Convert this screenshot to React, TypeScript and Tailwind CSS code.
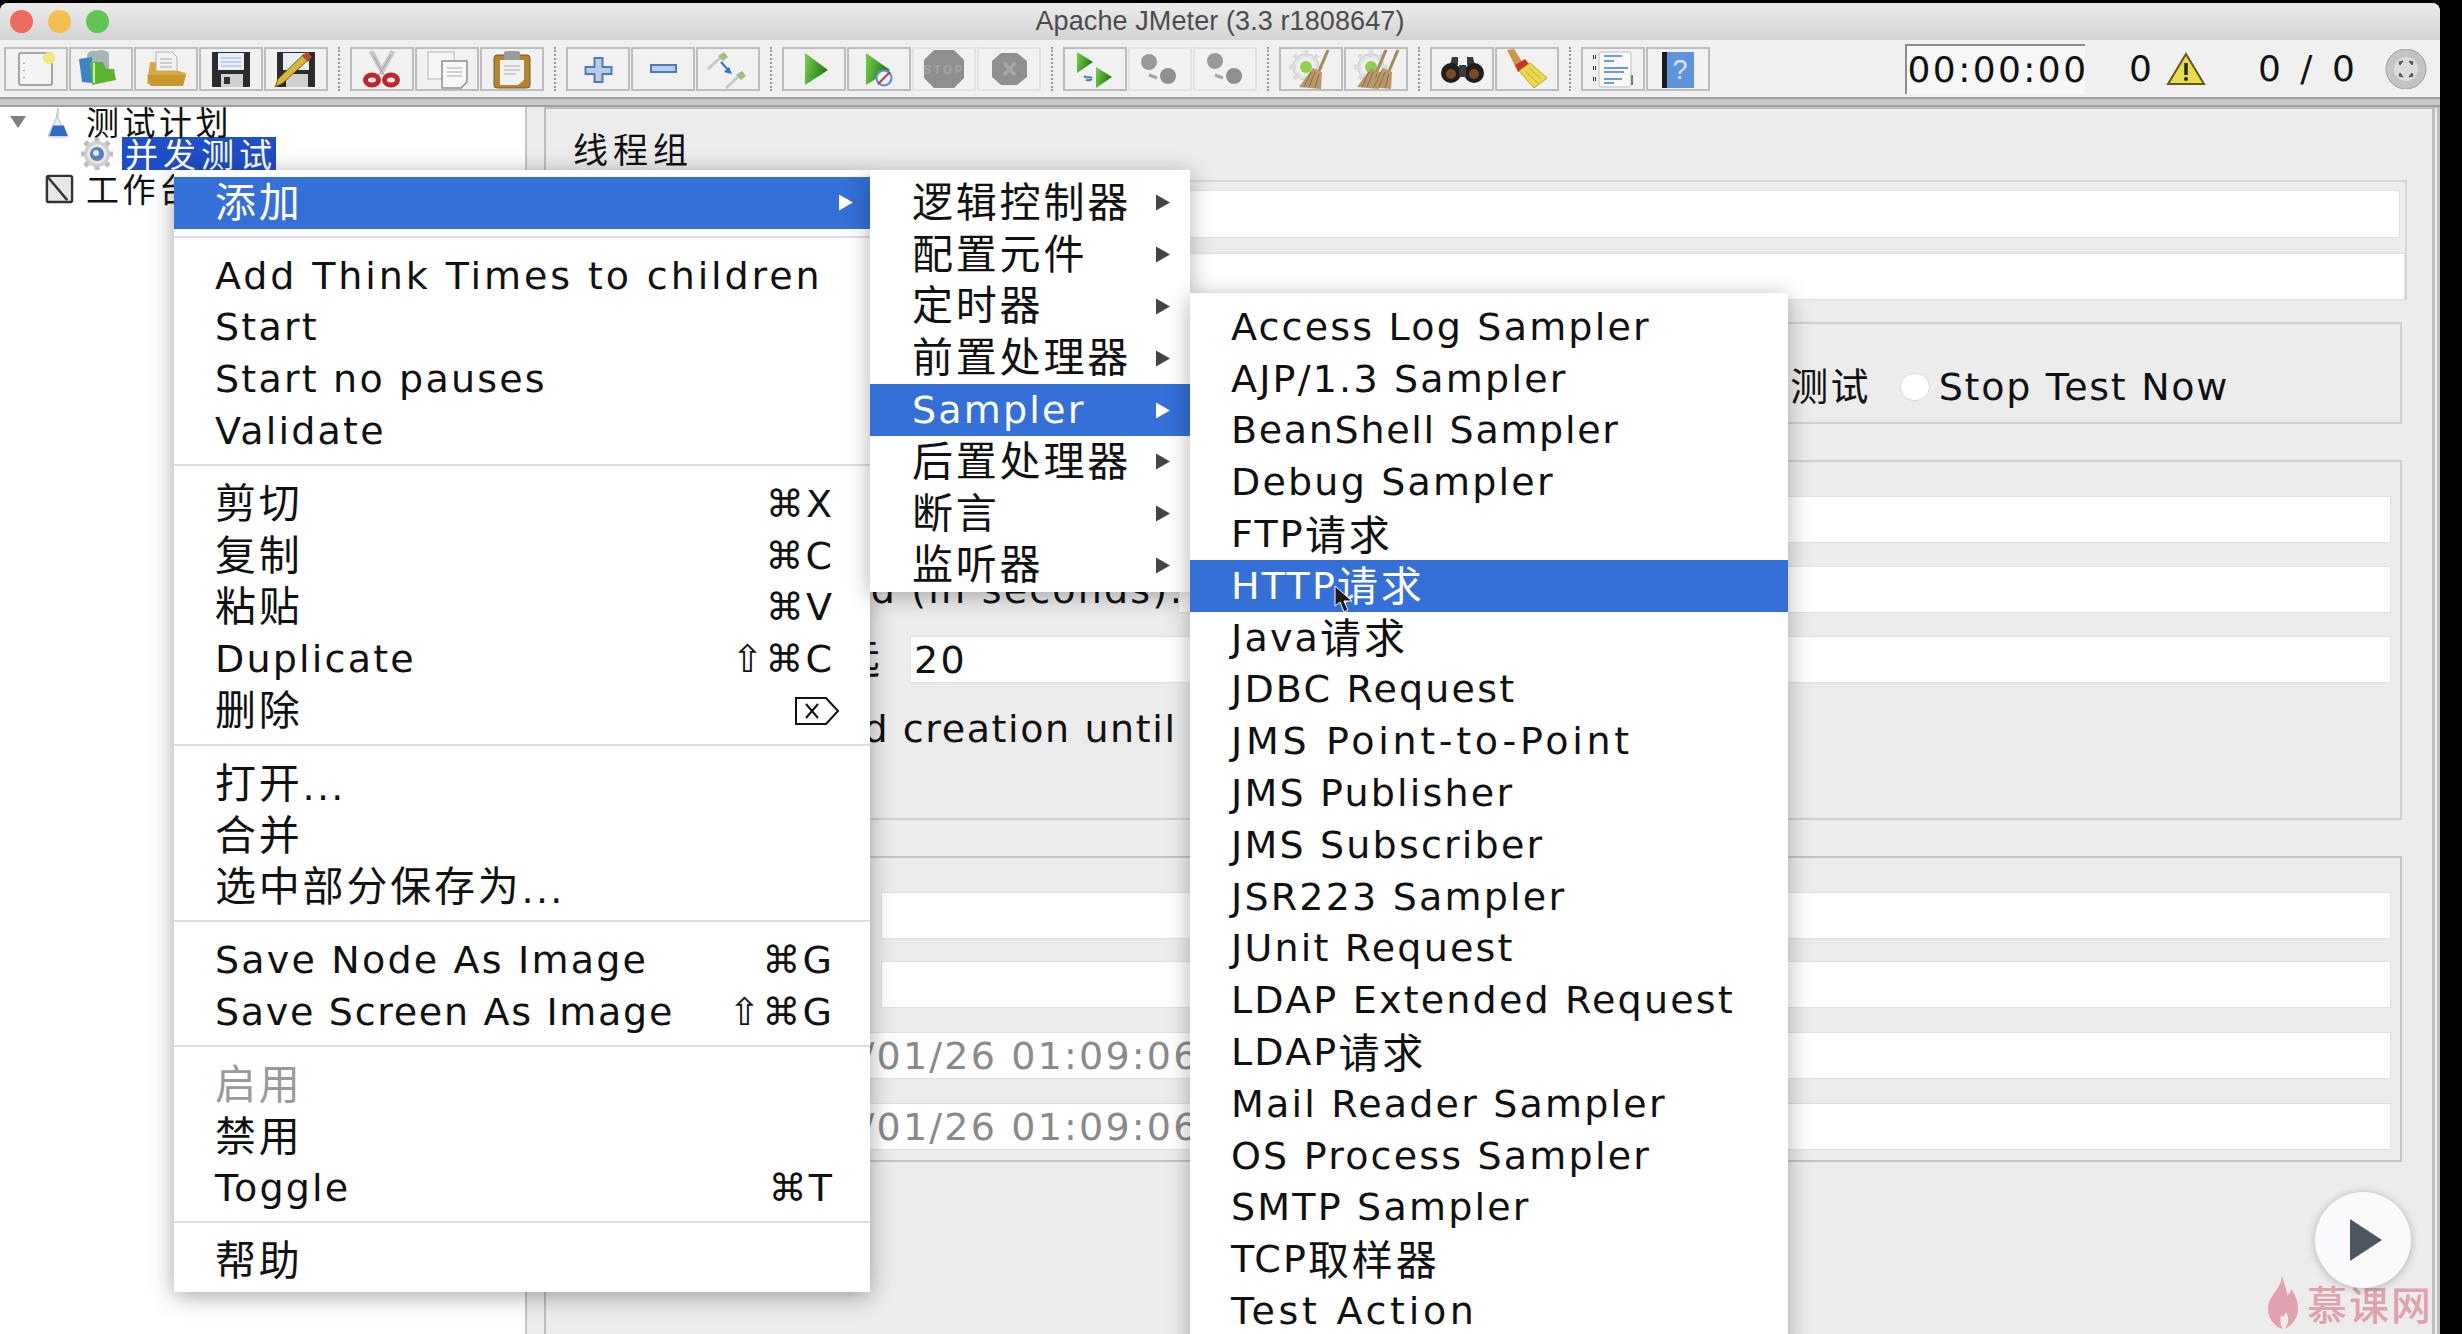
import React from "react";

const T = ({ text }: { text: string }) => (
  <>
    {text.split(/([\u4e00-\u9fff]+)/).map((part, i) =>
      /[\u4e00-\u9fff]/.test(part) ? (
        <span key={i} className="relative top-[-2px] font-['Noto_Sans_CJK_SC',sans-serif] text-[41px] tracking-[2.8px]">
          {part}
        </span>
      ) : (
        <span key={i}>{part}</span>
      ),
    )}
  </>
);

const Ico = ({ children }: { children: React.ReactNode }) => (
  <svg viewBox="0 0 64 44" className="h-[44px] w-[64px]">
    {children}
  </svg>
);

const Btn = ({ off, children }: { off?: boolean; children: React.ReactNode }) => (
  <div
    className={`h-[44px] w-[64px] shrink-0 border-2 bg-[#f1f1f2] ${off ? "border-[#e2e2e3]" : "border-[#bdbdbe]"}`}
  >
    <div className="-m-[2px]">{children}</div>
  </div>
);

const Sep = () => (
  <div className="flex h-[44px] w-[22px] shrink-0 justify-center">
    <div className="h-full border-l-2 border-dotted border-[#9a9a9a]" />
  </div>
);

const Broom = ({ dx = 0 }: { dx?: number }) => (
  <g transform={`translate(${dx} 0)`}>
    <path d="M49 3 L40 24" stroke="#a58a5c" strokeWidth="3" />
    <path d="M34 21 L43 25 L42 42 L20 40 Z" fill="#b8976a" />
    <path d="M36 25 L30 40 M40 27 L36 41 M32 25 L25 40" stroke="#8c6d43" strokeWidth="1" />
  </g>
);

const Gear = () => (
  <g>
    <circle cx="27" cy="20" r="13" fill="#e6e6e6" stroke="#c4c4c4" />
    <path d="M27 3v34M10 20h34M15 8l24 24M39 8L15 32" stroke="#dcdcdc" strokeWidth="5" />
    <circle cx="27" cy="20" r="10" fill="#eeeeee" />
    <circle cx="27" cy="20" r="6" fill="#8fd14f" />
  </g>
);

const Dropper = ({ x, y }: { x: number; y: number }) => (
  <g transform={`translate(${x} ${y})`}>
    <path d="M0 14 L13 2" stroke="#c9c9c9" strokeWidth="3" />
    <path d="M10 1 L16 -3 L20 2 L15 6 Z" fill="#9cc47a" />
  </g>
);

const icons: { off?: boolean; el: React.ReactNode }[][] = [
  [
    {
      el: (
        <Ico>
          <rect x="15" y="6" width="33" height="32" rx="2" fill="#f4f4f4" stroke="#8b8b8b" strokeWidth="1.5" />
          <circle cx="45" cy="11" r="6" fill="#f3e87e" />
          <path d="M20 16v1M20 23v1M20 30v1" stroke="#888" strokeWidth="1.5" />
        </Ico>
      ),
    },
    {
      el: (
        <Ico>
          <path d="M18 8c1-4 5-5 9-4 4-2 10-1 13 2v20H20z" fill="#a9b4ba" />
          <path d="M10 12l13-2v26l-10-1z" fill="#3a85c6" />
          <path d="M21 15h13l3 7h8l2 11-24 5z" fill="#5cb531" />
          <path d="M25 16v20" stroke="#c9eab5" strokeWidth="2" />
        </Ico>
      ),
    },
    {
      el: (
        <Ico>
          <path d="M22 5h16l5 5v14H22z" fill="#f2f2f2" stroke="#b5b5b5" />
          <path d="M26 12h12M26 16h12M26 20h12" stroke="#aaa" />
          <path d="M16 15h6v9h22l8 2-3 13H17l-4-3z" fill="#d9a93f" />
          <path d="M13 28h39l-3 11H17z" fill="#c9982f" />
        </Ico>
      ),
    },
    {
      el: (
        <Ico>
          <path d="M13 5h38v35H13z" fill="#2c2c2c" />
          <rect x="19" y="6" width="26" height="17" fill="#e7edf7" />
          <path d="M22 11h20M22 15h20M22 19h20" stroke="#9db4d6" />
          <rect x="22" y="27" width="22" height="13" fill="#d0d0d0" />
          <rect x="25" y="30" width="6" height="7" fill="#333" />
        </Ico>
      ),
    },
    {
      el: (
        <Ico>
          <path d="M13 5h38v35H13z" fill="#2c2c2c" />
          <rect x="19" y="6" width="26" height="17" fill="#e7edf7" />
          <rect x="22" y="27" width="22" height="13" fill="#d0d0d0" />
          <path d="M11 40l3-8 26-25 5 5-26 24z" fill="#d9b53a" stroke="#6f5a14" />
          <path d="M38 9l6 6 4-5-5-5z" fill="#b8472f" />
        </Ico>
      ),
    },
  ],
  [
    {
      el: (
        <Ico>
          <path d="M21 4l11 20 11-20" fill="none" stroke="#c9c9c9" strokeWidth="5" />
          <path d="M23 8l11 20M41 8L29 28" stroke="#a0a0a0" strokeWidth="1" />
          <ellipse cx="22" cy="33" rx="6.5" ry="5" fill="none" stroke="#c2262a" strokeWidth="5" />
          <ellipse cx="41" cy="33" rx="6.5" ry="5" fill="none" stroke="#c2262a" strokeWidth="5" />
        </Ico>
      ),
    },
    {
      el: (
        <Ico>
          <rect x="13" y="5" width="26" height="27" fill="#f5f5f5" stroke="#c9c9c9" strokeWidth="1.5" />
          <path d="M27 14h25v21l-6 6H27z" fill="#f7f7f7" stroke="#8f8f8f" strokeWidth="1.5" />
          <path d="M32 21h15M32 25h15M32 29h15" stroke="#a8a8a8" />
        </Ico>
      ),
    },
    {
      el: (
        <Ico>
          <rect x="14" y="8" width="36" height="33" rx="3" fill="#b28533" stroke="#7c5a20" />
          <path d="M20 13h24v20l-6 5H20z" fill="#f2f2f2" />
          <rect x="24" y="4" width="16" height="9" rx="2" fill="#9a9a9a" />
          <path d="M24 19h16M24 23h16M24 27h12" stroke="#aaa" />
        </Ico>
      ),
    },
  ],
  [
    {
      el: (
        <Ico>
          <path
            d="M28.5 11h8v9h9v7h-9v8h-8v-8h-9v-7h9z"
            fill="#b9cdea"
            stroke="#4f7cb9"
            strokeWidth="2"
          />
        </Ico>
      ),
    },
    {
      el: (
        <Ico>
          <rect x="20" y="18" width="25" height="7" fill="#b9cdea" stroke="#4f7cb9" strokeWidth="2" />
        </Ico>
      ),
    },
    {
      el: (
        <Ico>
          <Dropper x={12} y={8} />
          <Dropper x={30} y={27} />
          <path d="M25 15l8 9" stroke="#2f6fd0" strokeWidth="2" />
          <path d="M36 27l-8-2 5-5z" fill="#2f6fd0" />
        </Ico>
      ),
    },
  ],
  [
    {
      el: (
        <Ico>
          <defs>
            <linearGradient id="grn" x1="0" y1="0" x2="1" y2="0.3">
              <stop offset="0" stopColor="#7bd04a" />
              <stop offset="1" stopColor="#1f7a16" />
            </linearGradient>
          </defs>
          <path d="M23 6 L46 23 L23 38 Z" fill="url(#grn)" />
        </Ico>
      ),
    },
    {
      el: (
        <Ico>
          <path d="M19 6 L43 23 L19 38 Z" fill="url(#grn)" />
          <circle cx="37" cy="31" r="7.5" fill="#e9eff8" stroke="#5b8bd0" strokeWidth="2" />
          <path d="M31 37l12-12" stroke="#c23b3b" strokeWidth="2" />
        </Ico>
      ),
    },
    {
      off: true,
      el: (
        <Ico>
          <path d="M22 3h20l10 10v18L42 41H22L12 31V13z" fill="#8f8f8f" />
          <text x="32" y="27" textAnchor="middle" fontFamily="Liberation Sans" fontWeight="700" fontSize="12" fill="#a3a3a3">
            STOP
          </text>
        </Ico>
      ),
    },
    {
      off: true,
      el: (
        <Ico>
          <path d="M24 6h16l10 8v16l-10 8H24l-9-8V14z" fill="#8f8f8f" />
          <path d="M27 16l11 12M38 16L27 28" stroke="#a5a5a5" strokeWidth="4" />
        </Ico>
      ),
    },
  ],
  [
    {
      el: (
        <Ico>
          <path d="M14 5 L30 15 L14 26 Z" fill="url(#grn)" />
          <path d="M33 20 L49 30 L33 41 Z" fill="url(#grn)" />
          <path d="M21 29c3 3 5 0 8 2M23 33c3 1 5-1 6 0" stroke="#4f78c8" strokeWidth="2" fill="none" />
        </Ico>
      ),
    },
    {
      off: true,
      el: (
        <Ico>
          <circle cx="21" cy="15" r="8" fill="#999" />
          <circle cx="40" cy="29" r="8" fill="#8f8f8f" />
          <path d="M21 28l8 3" stroke="#a5a5a5" strokeWidth="3" />
        </Ico>
      ),
    },
    {
      off: true,
      el: (
        <Ico>
          <circle cx="22" cy="14" r="8" fill="#999" />
          <circle cx="41" cy="29" r="8" fill="#8f8f8f" />
          <path d="M22 28l8 3" stroke="#a5a5a5" strokeWidth="3" />
        </Ico>
      ),
    },
  ],
  [
    {
      el: (
        <Ico>
          <Gear />
          <Broom />
        </Ico>
      ),
    },
    {
      el: (
        <Ico>
          <Gear />
          <Broom dx={-7} />
          <Broom dx={5} />
        </Ico>
      ),
    },
  ],
  [
    {
      el: (
        <Ico>
          <path d="M22 10h6v8h9v-8h6l2 8H20z" fill="#3a3a3a" />
          <circle cx="21" cy="26" r="10" fill="#1f1f1f" />
          <circle cx="44" cy="26" r="10" fill="#1f1f1f" />
          <circle cx="21" cy="27" r="5" fill="#7b4a22" />
          <circle cx="44" cy="27" r="5" fill="#7b4a22" />
          <rect x="29" y="18" width="7" height="12" fill="#3a3a3a" />
        </Ico>
      ),
    },
    {
      el: (
        <Ico>
          <path d="M12 3l7-1 9 14-7 5z" fill="#c99a4a" />
          <path d="M20 18l10-6 4 5-11 8z" fill="#c9352c" />
          <path d="M24 24l11-8 17 15-13 10z" fill="#ecd94e" stroke="#b9a52b" />
          <path d="M30 24l14 13M34 21l12 11" stroke="#c9b22f" />
        </Ico>
      ),
    },
  ],
  [
    {
      el: (
        <Ico>
          <rect x="18" y="5" width="32" height="35" rx="2" fill="#f8f8f8" stroke="#c2c2c2" />
          <path d="M12 10h3M12 21h3M12 32h3" stroke="#333" strokeWidth="4" strokeDasharray="1 1" />
          <path d="M23 9h18M23 14h10M23 21h24M23 25h20M23 32h18M23 36h10" stroke="#6e9bd6" strokeWidth="2" />
          <rect x="50" y="28" width="2" height="10" fill="#4aa33a" />
        </Ico>
      ),
    },
    {
      el: (
        <Ico>
          <rect x="16" y="5" width="32" height="36" fill="#5f93dc" />
          <rect x="16" y="5" width="5" height="36" fill="#1c1c1c" />
          <text x="35" y="32" textAnchor="middle" fontFamily="Liberation Sans" fontSize="27" fill="#dce7f7">
            ?
          </text>
        </Ico>
      ),
    },
  ],
];

const Arrow = ({ on }: { on?: boolean }) => (
  <svg viewBox="0 0 16 16" className="h-[17px] w-[16px]">
    <path d="M1 0 L15 8 L1 16 Z" fill={on ? "#ffffff" : "#444444"} />
  </svg>
);

// Lucida's widths differ per string, so a few rows get their own tracking
const rowTrack: Record<string, string> = {
  "Add Think Times to children": "tracking-[2.9px]",
  "Save Screen As Image": "tracking-[1.7px]",
  "BeanShell Sampler": "tracking-[1.7px]",
  "JMS Point-to-Point": "tracking-[3.7px]",
  "Test Action": "tracking-[3.7px]",
};

const Row = ({ label, on, dim, right }: { label: string; on?: boolean; dim?: boolean; right?: React.ReactNode }) => (
  <div
    className={`flex h-[51.8px] items-center justify-between pl-[41px] pr-[36px] ${on ? "bg-[#3570d8] text-white" : dim ? "text-[#9a9a9a]" : "text-[#111111]"}`}
  >
    <span className={`whitespace-nowrap ${rowTrack[label] ?? ""}`}>
      <T text={label} />
    </span>
    {right}
  </div>
);

const Line = () => (
  <div className="h-[21px] pt-[7px]">
    <div className="h-[2px] bg-[#dedede]" />
  </div>
);

const Key = ({ k }: { k: string }) => <span className="whitespace-nowrap text-[38px] tracking-[2px]">{k}</span>;

const sub1 = ["逻辑控制器", "配置元件", "定时器", "前置处理器", "Sampler", "后置处理器", "断言", "监听器"];
const sub2 = [
  "Access Log Sampler",
  "AJP/1.3 Sampler",
  "BeanShell Sampler",
  "Debug Sampler",
  "FTP请求",
  "HTTP请求",
  "Java请求",
  "JDBC Request",
  "JMS Point-to-Point",
  "JMS Publisher",
  "JMS Subscriber",
  "JSR223 Sampler",
  "JUnit Request",
  "LDAP Extended Request",
  "LDAP请求",
  "Mail Reader Sampler",
  "OS Process Sampler",
  "SMTP Sampler",
  "TCP取样器",
  "Test Action",
];

const Field = ({ className, children }: { className: string; children?: React.ReactNode }) => (
  <div className={`h-[47px] overflow-hidden whitespace-nowrap border border-[#e0e0e0] bg-white leading-[46px] ${className}`}>
    {children}
  </div>
);

export default function App() {
  return (
    <div className="relative h-[1334px] w-[2462px] overflow-hidden bg-black pt-[3px] font-['DejaVu_Sans','Noto_Sans_CJK_SC',sans-serif] text-[38px] leading-none tracking-[2.2px] text-[#111111]">
      <div className="flex h-[1331px] w-[2440px] flex-col overflow-hidden rounded-t-[8px] bg-[#ececed]">
        {/* title bar */}
        <div className="relative flex h-[37px] shrink-0 items-center justify-center bg-gradient-to-b from-[#ececec] to-[#d3d3d3] font-['Liberation_Sans',sans-serif] text-[27px] tracking-[0.1px] text-[#4c4c4c]">
          <div className="absolute left-[10px] top-[7px] flex gap-[15px]">
            <div className="h-[23px] w-[23px] rounded-full bg-[#ec6a5e]" />
            <div className="h-[23px] w-[23px] rounded-full bg-[#f4bf4f]" />
            <div className="h-[23px] w-[23px] rounded-full bg-[#61c554]" />
          </div>
          Apache JMeter (3.3 r1808647)
        </div>

        {/* toolbar */}
        <div className="flex h-[57px] shrink-0 items-center bg-[#f0f0f1] pl-[4px]">
          {icons.map((group, g) => (
            <React.Fragment key={g}>
              {g > 0 && <Sep />}
              <div className="flex gap-[1px]">
                {group.map((b, i) => (
                  <Btn key={i} off={b.off}>
                    {b.el}
                  </Btn>
                ))}
              </div>
            </React.Fragment>
          ))}
          <div className="ml-[195px] flex h-[50px] w-[180px] items-center justify-center border-l-2 border-t-2 border-[#8d8d8d] bg-[#f7f7f7] pl-[4px] text-[36px] tracking-[2.4px] text-[#111111]">
            00:00:00
          </div>
          <span className="ml-[44px] w-[36px] text-[36px]">0</span>
          <svg viewBox="0 0 40 34" className="h-[34px] w-[42px]">
            <path d="M20 2 L38 32 H2 Z" fill="#e8dc4a" stroke="#5d5a1e" strokeWidth="2" />
            <path d="M20 11v12" stroke="#222" strokeWidth="3.5" />
            <circle cx="20" cy="27" r="2" fill="#222" />
          </svg>
          <span className="ml-[51px] w-[126px] whitespace-nowrap text-[36px] tracking-[4px]">0 / 0</span>
          <svg viewBox="0 0 44 40" className="h-[40px] w-[44px]">
            <circle cx="22" cy="20" r="20" fill="#c4c4c4" stroke="#a0a0a0" />
            <circle cx="22" cy="20" r="12" fill="#dcdcdc" />
            <path d="M15 13l4-1-3 4zM29 13l-4-1 3 4zM15 27l4 1-3-4zM29 27l-4 1 3-4z" fill="#555" stroke="#555" />
          </svg>
        </div>

        <div className="h-[10px] shrink-0 border-y-2 border-[#9f9f9f] bg-[#c9c9c9]" />

        {/* body */}
        <div className="flex min-h-0 flex-1">
          <div className="w-[527px] shrink-0 border-r-2 border-[#c4c4c4] bg-white font-['Noto_Sans_CJK_SC',sans-serif] text-[33px] tracking-[3.5px]">
            <div className="flex h-[30px] items-center">
              <svg viewBox="0 0 16 12" className="ml-[10px] h-[12px] w-[16px]">
                <path d="M0 0 H16 L8 12 Z" fill="#7f7f7f" />
              </svg>
              <svg viewBox="0 0 28 32" className="ml-[18px] h-[31px] w-[28px]">
                <path d="M14 1v11l10 17a2 2 0 0 1-2 2H6a2 2 0 0 1-2-2l8-17z" fill="#e9eef4" stroke="#b6c0cc" />
                <path d="M9 19h11l4 11H5z" fill="#2f6cc8" />
              </svg>
              <span className="relative top-[-1px] ml-[14px]">测试计划</span>
            </div>
            <div className="flex h-[33px] items-center pl-[78px]">
              <svg viewBox="0 0 38 32" className="h-[32px] w-[38px]">
                <path d="M19 0v32M3 16h32M7 4l24 24M31 4L7 28" stroke="#bdbdbd" strokeWidth="5" />
                <circle cx="19" cy="16" r="13" fill="#cfcfcf" />
                <circle cx="19" cy="16" r="10" fill="#e8e8e8" />
                <circle cx="19" cy="16" r="7" fill="#5b7fb8" />
                <circle cx="18" cy="15" r="3" fill="#dfe8f5" />
              </svg>
              <span className="ml-[6px] flex h-[33px] w-[154px] items-center whitespace-nowrap bg-[#1f4fc8] pl-[3px] tracking-[5px] text-white">
                并发测试
              </span>
            </div>
            <div className="mt-[1px] flex h-[34px] items-center pl-[44px]">
              <svg viewBox="0 0 32 32" className="h-[31px] w-[31px]">
                <rect x="3" y="3" width="26" height="27" rx="2" fill="#e6e6e6" stroke="#333" strokeWidth="2.5" />
                <path d="M3 3 L24 28" stroke="#333" strokeWidth="2.5" />
              </svg>
              <span className="ml-[11px]">工作台</span>
            </div>
          </div>
          <div className="w-[17px] shrink-0 bg-[#ececed]" />

          <div className="min-w-0 flex-1 border-l-2 border-r-[8px] border-t-2 border-[#bdbdbd] [border-right-style:double] pl-[12px] pr-[25px]">
            <div className="flex h-[71px] items-center pl-[15px] pt-[5px] font-['Noto_Sans_CJK_SC',sans-serif] text-[35px] tracking-[5px]">
              线程组
            </div>
            <div className="h-[120px] border-r-2 border-t-2 border-[#d6d6d6] pt-[8px]">
              <Field className="mr-[5px] h-[48px]" />
              <Field className="mt-[15px]" />
            </div>
            <div className="mr-[5px] mt-[22px] flex h-[102px] items-end justify-end border-2 border-[#d0d0d0] pb-[10px] pr-[171px]">
              <div className="flex h-[50px] items-center">
                <span className="whitespace-nowrap">停止测试</span>
                <div className="ml-[29px] h-[28px] w-[30px] rounded-full border border-[#d8d8d8] bg-white" />
                <span className="ml-[9px] whitespace-nowrap tracking-[1.7px]">Stop Test Now</span>
              </div>
            </div>
            <div className="mr-[5px] mt-[36px] h-[360px] border-2 border-[#d0d0d0] pr-[9px] pt-[34px]">
              <div className="flex h-[47px] items-center">
                <div className="w-[610px]" />
                <Field className="ml-[8px] flex-1" />
              </div>
              <div className="mt-[23px] flex h-[47px] items-center">
                <div className="w-[602px] whitespace-nowrap text-right">Ramp-Up Period (in seconds):</div>
                <Field className="ml-[16px] flex-1" />
              </div>
              <div className="mt-[23px] flex h-[47px] items-center">
                <div className="w-[323px] whitespace-nowrap text-right">
                  <T text="永远" />
                </div>
                <Field className="ml-[27px] flex-1 pl-[3px]">20</Field>
              </div>
              <div className="mt-[23px] flex h-[46px] items-center whitespace-nowrap pl-[56px] tracking-[1.6px]">
                Delay Thread creation until needed
              </div>
            </div>
            <div className="mr-[5px] mt-[36px] h-[306px] border-2 border-[#c4c4c4] pr-[9px] pt-[34px]">
              <Field className="ml-[321px]" />
              <Field className="ml-[321px] mt-[22px]" />
              <Field className="ml-[195px] mt-[24px] text-[#8a8a8a]">2018/01/26 01:09:06</Field>
              <Field className="ml-[195px] mt-[24px] text-[#8a8a8a]">2018/01/26 01:09:06</Field>
            </div>
          </div>
        </div>
      </div>

      {/* context menu */}
      <div className="absolute left-[174px] top-[170px] h-[1122px] w-[696px] bg-white pt-[7px] shadow-[0_4px_22px_rgba(0,0,0,0.35)]">
        <Row label="添加" on right={<span className="-mr-[20px] flex"><Arrow on /></span>} />
        <Line />
        <Row label="Add Think Times to children" />
        <Row label="Start" />
        <Row label="Start no pauses" />
        <Row label="Validate" />
        <Line />
        <Row label="剪切" right={<Key k="⌘X" />} />
        <Row label="复制" right={<Key k="⌘C" />} />
        <Row label="粘贴" right={<Key k="⌘V" />} />
        <Row label="Duplicate" right={<Key k="⇧⌘C" />} />
        <Row
          label="删除"
          right={
            <svg viewBox="0 0 46 30" className="-mr-[6px] h-[30px] w-[46px]">
              <path d="M2 2 H32 L44 15 L32 28 H2 Z" fill="none" stroke="#111" strokeWidth="2" />
              <path d="M12 8 L24 22 M24 8 L12 22" stroke="#111" strokeWidth="2" />
            </svg>
          }
        />
        <Line />
        <Row label="打开..." />
        <Row label="合并" />
        <Row label="选中部分保存为..." />
        <Line />
        <Row label="Save Node As Image" right={<Key k="⌘G" />} />
        <Row label="Save Screen As Image" right={<Key k="⇧⌘G" />} />
        <Line />
        <Row label="启用" dim />
        <Row label="禁用" />
        <Row label="Toggle" right={<Key k="⌘T" />} />
        <Line />
        <Row label="帮助" />
      </div>

      {/* first submenu */}
      <div className="absolute left-[870px] top-[170px] h-[422px] w-[320px] bg-white pt-[7px] shadow-[0_4px_22px_rgba(0,0,0,0.3)]">
        {sub1.map((s) => (
          <div
            key={s}
            className={`flex h-[51.8px] items-center justify-between pl-[42px] pr-[19px] ${s === "Sampler" ? "bg-[#3570d8] text-white" : ""}`}
          >
            <span className="whitespace-nowrap">
              <T text={s} />
            </span>
            <Arrow on={s === "Sampler"} />
          </div>
        ))}
      </div>

      {/* samplers */}
      <div className="absolute left-[1190px] top-[293px] h-[1060px] w-[598px] bg-white pt-[8px] shadow-[0_4px_22px_rgba(0,0,0,0.3)]">
        {sub2.map((s) => (
          <div
            key={s}
            className={`flex h-[51.8px] items-center whitespace-nowrap pl-[41px] ${s === "HTTP请求" ? "bg-[#3570d8] text-white" : ""} ${rowTrack[s] ?? ""}`}
          >
            <T text={s} />
          </div>
        ))}
      </div>

      {/* pointer */}
      <svg viewBox="0 0 20 28" className="absolute left-[1334px] top-[585px] h-[28px] w-[20px]">
        <path d="M1 1 L1 21 L6 17 L10 27 L14 25 L10 16 L18 16 Z" fill="#1b1b1b" stroke="#ffffff" strokeWidth="1" />
      </svg>

      {/* video player button and watermark */}
      <svg viewBox="0 0 30 54" className="absolute left-[2268px] top-[1275px] h-[54px] w-[30px]">
        <path
          d="M14 0c2 10 5 13 5 20 3-1 4-4 4-6 5 6 7 13 7 20 0 10-7 17-13 20 3-5 5-10 1-17-2 5-4 6-5 3-1 4-1 10 2 14C7 52 0 44 0 34 0 20 13 16 14 0z"
          fill="#e0a3ae"
        />
      </svg>
      <div className="absolute left-[2307px] top-[1283px] whitespace-nowrap font-['Noto_Sans_CJK_SC',sans-serif] text-[40px] font-medium tracking-[2px] text-[#dfa3ad]">
        慕课网
      </div>
      <div className="absolute left-[2315px] top-[1192px] flex h-[96px] w-[96px] items-center justify-center rounded-full bg-[#fafafc] pl-[5px] shadow-[0_1px_8px_rgba(0,0,0,0.25)]">
        <svg viewBox="0 0 32 42" className="h-[42px] w-[32px]">
          <path d="M0 0 L32 21 L0 42 Z" fill="#4d5560" />
        </svg>
      </div>
    </div>
  );
}
